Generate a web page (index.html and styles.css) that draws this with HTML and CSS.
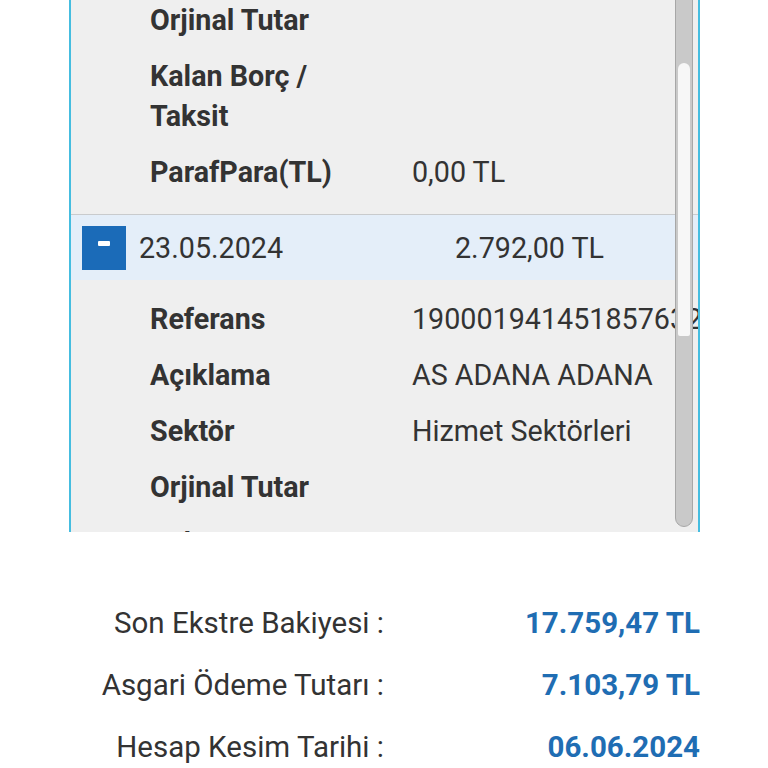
FILE: index.html
```html
<!DOCTYPE html>
<html lang="tr">
<head>
<meta charset="utf-8">
<title>Ekstre</title>
<link rel="stylesheet" href="styles.css">
</head>
<body>
<div class="panel">
  <div class="scroller">
    <div class="group">
      <div class="row"><div class="k">Orjinal Tutar</div><div class="v"></div></div>
      <div class="row"><div class="k">Kalan Borç / Taksit</div><div class="v"></div></div>
      <div class="row"><div class="k">ParafPara(TL)</div><div class="v">0,00 TL</div></div>
    </div>
    <div class="head">
      <span class="toggle" aria-label="-"><span class="dash"></span></span>
      <span class="date">23.05.2024</span>
      <span class="amount">2.792,00 TL</span>
    </div>
    <div class="group">
      <div class="row"><div class="k">Referans</div><div class="v">190001941451857632071</div></div>
      <div class="row"><div class="k">Açıklama</div><div class="v">AS ADANA ADANA</div></div>
      <div class="row"><div class="k">Sektör</div><div class="v">Hizmet Sektörleri</div></div>
      <div class="row"><div class="k">Orjinal Tutar</div><div class="v"></div></div>
      <div class="row"><div class="k">Kalan Borç / Taksit</div><div class="v"></div></div>
    </div>
  </div>
  <div class="scrollbar"><div class="thumb"></div></div>
</div>
<div class="summary">
  <div class="s-label">Son Ekstre Bakiyesi :</div><div class="s-value">17.759,47 TL</div>
  <div class="s-label">Asgari Ödeme Tutarı :</div><div class="s-value">7.103,79 TL</div>
  <div class="s-label">Hesap Kesim Tarihi :</div><div class="s-value">06.06.2024</div>
</div>
</body>
</html>
```
FILE: styles.css
```css
html, body {
  margin: 0;
  padding: 0;
  background: #ffffff;
}
body {
  font-family: Roboto, "Liberation Sans", sans-serif;
  font-size: 28.7px;
  color: #333333;
}
.panel {
  position: relative;
  margin-left: 69px;
  width: 627px;
  height: 532px;
  border-left: 2px solid #45bde0;
  border-right: 2px solid #45bde0;
  background: #efefef;
  overflow: hidden;
}
.scroller {
  margin-top: -8px;
}
.group {
  padding: 0 0 14px 0;
}
.group + .head + .group {
  padding-top: 11px;
}
.row {
  display: flex;
  padding: 8px 0;
  line-height: 40px;
}
.k {
  width: 200px;
  padding-left: 79px;
  padding-right: 62px;
  flex: none;
  font-weight: bold;
  color: #333333;
}
.v {
  white-space: nowrap;
  color: #333333;
}
.head {
  display: flex;
  align-items: center;
  height: 65px;
  border-top: 1px solid #c9cbcd;
  background: #e4eef9;
  padding-left: 11px;
}
.toggle {
  width: 44px;
  height: 44px;
  background: #1b6bb8;
  display: flex;
  align-items: flex-start;
  justify-content: center;
  flex: none;
}
.dash {
  display: block;
  width: 12px;
  height: 5px;
  margin-top: 15px;
  background: #ffffff;
  border-radius: 1px;
}
.date {
  margin-left: 13px;
  width: 316px;
  color: #333333;
}
.amount {
  color: #333333;
}
.scrollbar {
  position: absolute;
  left: 604px;
  top: -10px;
  width: 16px;
  height: 535px;
  background: #c9c9c9;
  border: 1px solid #a7a7a7;
  border-radius: 0 0 9px 9px;
}
.thumb {
  margin: 72px auto 0;
  width: 12px;
  height: 273px;
  background: #f7f7f7;
  border-radius: 6px 6px 2px 2px;
}
.summary {
  display: grid;
  grid-template-columns: 384px 316px;
  grid-auto-rows: 62px;
  margin-top: 60px;
  line-height: 62px;
  font-size: 29.5px;
}
.s-label {
  text-align: right;
  color: #333333;
}
.s-value {
  text-align: right;
  font-weight: bold;
  color: #1f6db3;
}
```
